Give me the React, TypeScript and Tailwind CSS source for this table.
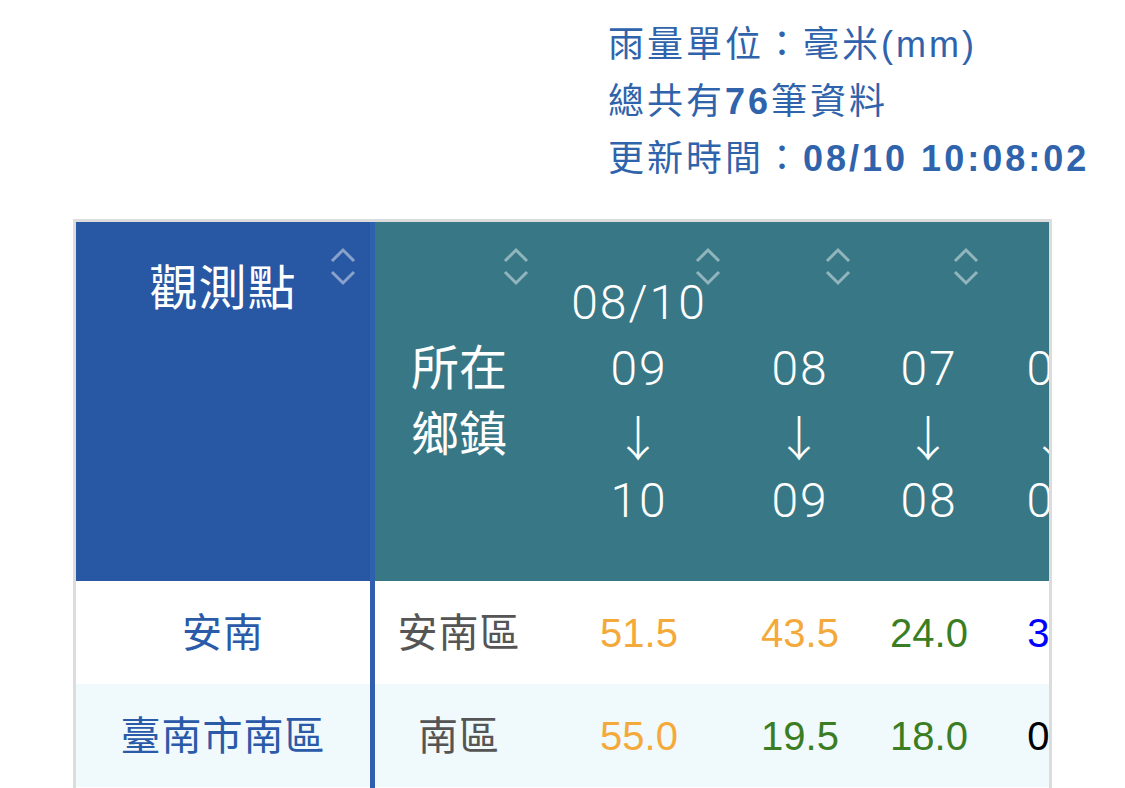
import React from 'react'

const hours = [
  { date: '08/10', from: '09', to: '10' },
  { date: '', from: '08', to: '09' },
  { date: '', from: '07', to: '08' },
  { date: '', from: '06', to: '07' },
  { date: '', from: '05', to: '06' },
]

const rows = [
  {
    name: '安南',
    town: '安南區',
    values: [
      { v: '51.5', c: 'text-[#f4a93b]' },
      { v: '43.5', c: 'text-[#f4a93b]' },
      { v: '24.0', c: 'text-[#3b7d22]' },
      { v: '3.0', c: 'text-[#0000ff]' },
      { v: '0.5', c: 'text-black' },
    ],
    bg: 'bg-white',
  },
  {
    name: '臺南市南區',
    town: '南區',
    values: [
      { v: '55.0', c: 'text-[#f4a93b]' },
      { v: '19.5', c: 'text-[#3b7d22]' },
      { v: '18.0', c: 'text-[#3b7d22]' },
      { v: '0.5', c: 'text-black' },
      { v: '0.0', c: 'text-black' },
    ],
    bg: 'bg-[#f0f9fc]',
  },
  {
    name: '七股',
    town: '七股區',
    values: [
      { v: '48.0', c: 'text-[#f4a93b]' },
      { v: '40.5', c: 'text-[#f4a93b]' },
      { v: '21.5', c: 'text-[#3b7d22]' },
      { v: '2.5', c: 'text-[#0000ff]' },
      { v: '0.0', c: 'text-black' },
    ],
    bg: 'bg-white',
  },
]

// widths of the hour columns, left to right
const hourWidths = ['w-[192px]', 'w-[130px]', 'w-[128px]', 'w-[124px]', 'w-[124px]']

function SortIcon() {
  return (
    <svg
      className="absolute top-[25px] right-[14px] text-white/45"
      width="26"
      height="39"
      viewBox="0 0 26 39"
      fill="none"
      stroke="currentColor"
      strokeWidth="3"
    >
      <path d="M2 14 L13 3 L24 14" />
      <path d="M2 25 L13 36 L24 25" />
    </svg>
  )
}

export default function App() {
  return (
    <div className="min-h-screen bg-white font-['Liberation_Sans','Noto_Sans_CJK_TC',sans-serif]">
      <div className="pl-[608px] pt-[16px] text-[36px] leading-[57px] tracking-[3px] text-[#2f63ab]">
        <p>雨量單位：毫米(mm)</p>
        <p>
          總共有<span className="font-bold">76</span>筆資料
        </p>
        <p>
          更新時間：<span className="font-bold">08/10 10:08:02</span>
        </p>
      </div>

      <div className="mx-[73px] mt-[32px] overflow-hidden border-x-[3px] border-t-[3px] border-[#dcdcdc]">
        <table className="w-[1165px] table-fixed border-separate border-spacing-0">
          <thead>
            <tr className="h-[359px] text-white">
              <th className="relative w-[299px] border-r-[5px] border-[#3061ae] bg-[#2857a3] pt-[34px] align-top text-[48px] leading-[66px] font-normal tracking-[1px]">
                觀測點
                <SortIcon />
              </th>
              <th className="relative w-[168px] bg-[#387886] align-middle text-[48px] leading-[66px] font-normal">
                所在
                <br />
                鄉鎮
                <SortIcon />
              </th>
              {hours.map((h, i) => (
                <th
                  key={i}
                  className={`relative ${hourWidths[i]} bg-[#387886] align-middle font-['Roboto','Liberation_Sans',sans-serif] text-[48px] leading-[66px] font-light tracking-[2px]`}
                >
                  <div className="h-[66px]">{h.date}</div>
                  <div>{h.from}</div>
                  <div className="font-['Noto_Sans_CJK_TC',sans-serif] font-light">↓</div>
                  <div>{h.to}</div>
                  <SortIcon />
                </th>
              ))}
            </tr>
          </thead>
          <tbody className="text-[40px] leading-[48px]">
            {rows.map((r) => (
              <tr key={r.name} className={`h-[103px] ${r.bg}`}>
                <td className="border-r-[5px] border-[#2f5fae] text-center tracking-[1px] text-[#2a5aa8]">
                  {r.name}
                </td>
                <td className="text-center tracking-[1px] text-[#555555]">{r.town}</td>
                {r.values.map((v, i) => (
                  <td key={i} className={`text-center ${v.c}`}>
                    {v.v}
                  </td>
                ))}
              </tr>
            ))}
          </tbody>
        </table>
      </div>
    </div>
  )
}
